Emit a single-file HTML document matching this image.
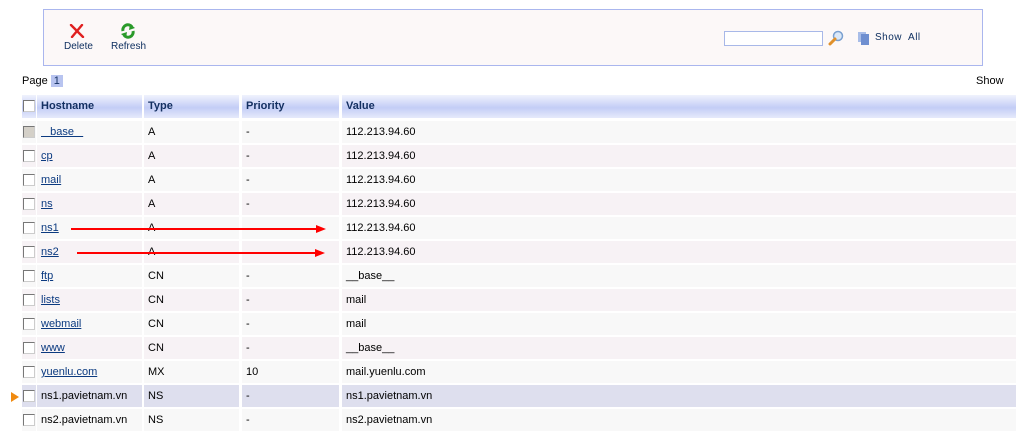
<!DOCTYPE html>
<html><head><meta charset="utf-8"><style>
*{margin:0;padding:0;box-sizing:border-box}
body{width:1016px;height:435px;overflow:hidden;background:#fff;font-family:"Liberation Sans",sans-serif;font-size:11px;color:#000;position:relative}
.a{position:absolute}
.tb{left:43px;top:9px;width:940px;height:57px;background:#fcf8f8;border:1px solid #aab6ee}
.lbl{color:#0f3060;font-size:10px}
.hd{top:95px;height:23px;background:linear-gradient(#f0f2fd,#c3cdf6 55%,#e6eafb);font-weight:bold;color:#143062;line-height:23px;padding-left:4px}
.c{height:22px;line-height:22px;padding-left:4px;white-space:nowrap}
a{color:#0b3a80;text-decoration:underline}
.cb{width:12px;height:12px;border:1px solid #777;border-right-color:#ccc;border-bottom-color:#ccc;background:#fff;position:absolute;left:23px}
</style></head><body>
<div class="a tb"></div>
<svg class="a" style="left:69px;top:24px" width="16" height="14"><path d="M2 1 L14 13 M13 1 L3 13" stroke="#e02020" stroke-width="2.4" stroke-linecap="round"/></svg>
<div class="a lbl" style="left:64px;top:41px">Delete</div>
<svg class="a" style="left:120px;top:23px" width="16" height="16"><path d="M3 8 A5 5 0 0 1 12 4" fill="none" stroke="#2a9a2a" stroke-width="3"/><path d="M10 1 L15 5 L9 7Z" fill="#2a9a2a"/><path d="M13 8 A5 5 0 0 1 4 12" fill="none" stroke="#2a9a2a" stroke-width="3"/><path d="M6 15 L1 11 L7 9Z" fill="#2a9a2a"/></svg>
<div class="a lbl" style="left:111px;top:41px">Refresh</div>
<div class="a" style="left:724px;top:31px;width:99px;height:15px;border:1px solid #a8b8e8;background:#fff"></div>
<svg class="a" style="left:828px;top:30px" width="16" height="16"><circle cx="10" cy="6" r="4.5" fill="#dbe8f8" stroke="#7aa0d0" stroke-width="1.5"/><path d="M7 9 L2 14" stroke="#e0902a" stroke-width="3" stroke-linecap="round"/></svg>
<svg class="a" style="left:858px;top:32px" width="12" height="13"><rect x="0" y="0" width="8" height="10" fill="#a8bde8"/><rect x="3" y="2" width="8" height="11" fill="#6f8fd0"/></svg>
<div class="a lbl" style="left:875px;top:32px;letter-spacing:0.5px">Show&nbsp; All</div>
<div class="a" style="left:22px;top:74px;line-height:14px">Page <span style="background:#b8c4f0;color:#143062;padding:0 3px">1</span></div>
<div class="a" style="left:976px;top:74px;line-height:14px">Show</div>
<div class="a hd" style="left:22px;width:14px;padding:0"></div>
<div class="cb" style="top:100px"></div>
<div class="a hd" style="left:37px;width:105px">Hostname</div>
<div class="a hd" style="left:144px;width:95px">Type</div>
<div class="a hd" style="left:242px;width:97px">Priority</div>
<div class="a hd" style="left:342px;width:674px">Value</div>
<div id="rows"></div>
<script>
var d=[["&nbsp;&nbsp;&nbsp;base&nbsp;&nbsp;&nbsp;","A","-","112.213.94.60",1],["cp","A","-","112.213.94.60",1],["mail","A","-","112.213.94.60",1],["ns","A","-","112.213.94.60",1],["ns1","A","","112.213.94.60",1],["ns2","A","","112.213.94.60",1],["ftp","CN","-","__base__",1],["lists","CN","-","mail",1],["webmail","CN","-","mail",1],["www","CN","-","__base__",1],["yuenlu.com","MX","10","mail.yuenlu.com",1],["ns1.pavietnam.vn","NS","-","ns1.pavietnam.vn",0],["ns2.pavietnam.vn","NS","-","ns2.pavietnam.vn",0]];
var h="";
d.forEach(function(r,i){var t=121+24*i;var bg=i==11?"#dedfee":(i%2?"#f7f2f5":"#f8f8f8");
var cols=[[22,14],[37,105],[144,95],[242,97],[342,674]];
cols.forEach(function(c,j){var txt=j==0?"":j==1?(r[4]?'<a>'+r[0]+'</a>':r[0]):r[j-1];h+='<div class="a c" style="left:'+c[0]+'px;top:'+t+'px;width:'+c[1]+'px;background:'+bg+'">'+txt+'</div>';});
h+='<div class="cb" style="top:'+(t+5)+'px'+(i==0?';background:#d4d0c8':'')+'"></div>';});
document.getElementById("rows").innerHTML=h;
</script>
<svg class="a" style="left:0;top:0" width="1016" height="435">
<path d="M71 229 H318" stroke="#f00" stroke-width="2"/><path d="M316 225 L326 229 L316 233Z" fill="#f00"/>
<path d="M77 253 H317" stroke="#f00" stroke-width="2"/><path d="M315 249 L325 253 L315 257Z" fill="#f00"/>
<path d="M11 392 L19 397 L11 402Z" fill="#f08a10"/>
</svg>
</body></html>
